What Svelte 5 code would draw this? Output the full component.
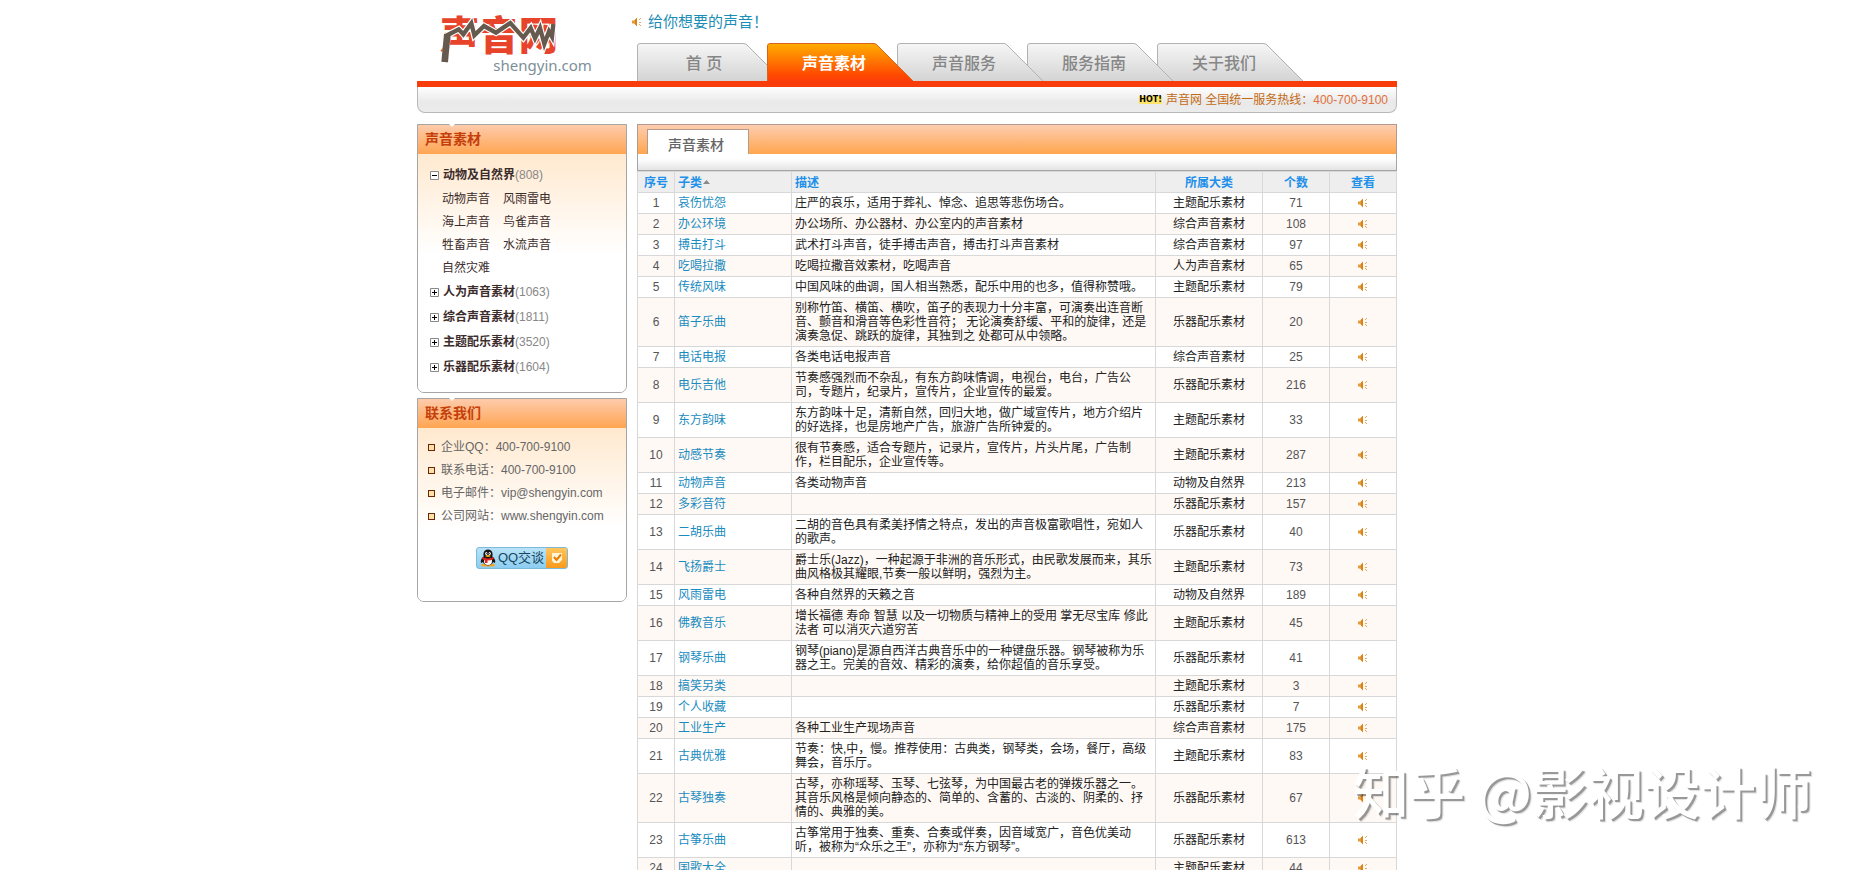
<script>
    const tabs = ['首 页', '声音素材', '声音服务', '服务指南', '关于我们'];
    let active = $state(1);

    const categories = [
        {name: '动物及自然界', count: 808, children: ['动物声音', '风雨雷电', '海上声音', '鸟雀声音', '牲畜声音', '水流声音', '自然灾难']},
        {name: '人为声音素材', count: 1063},
        {name: '综合声音素材', count: 1811},
        {name: '主题配乐素材', count: 3520},
        {name: '乐器配乐素材', count: 1604}
    ];

    const contacts = [
        ['企业QQ', '400-700-9100'],
        ['联系电话', '400-700-9100'],
        ['电子邮件', 'vip@shengyin.com'],
        ['公司网站', 'www.shengyin.com']
    ];

    const rows = [
        ['哀伤忧怨', '庄严的哀乐，适用于葬礼、悼念、追思等悲伤场合。', '主题配乐素材', 71],
        ['办公环境', '办公场所、办公器材、办公室内的声音素材', '综合声音素材', 108],
        ['搏击打斗', '武术打斗声音，徒手搏击声音，搏击打斗声音素材', '综合声音素材', 97],
        ['吃喝拉撒', '吃喝拉撒音效素材，吃喝声音', '人为声音素材', 65],
        ['传统风味', '中国风味的曲调，国人相当熟悉，配乐中用的也多，值得称赞哦。', '主题配乐素材', 79],
        ['笛子乐曲', '别称竹笛、横笛、横吹，笛子的表现力十分丰富，可演奏出连音断音、颤音和滑音等色彩性音符； 无论演奏舒缓、平和的旋律，还是演奏急促、跳跃的旋律，其独到之 处都可从中领略。', '乐器配乐素材', 20],
        ['电话电报', '各类电话电报声音', '综合声音素材', 25],
        ['电乐吉他', '节奏感强烈而不杂乱，有东方韵味情调，电视台，电台，广告公司，专题片，纪录片，宣传片，企业宣传的最爱。', '乐器配乐素材', 216],
        ['东方韵味', '东方韵味十足，清新自然，回归大地，做广域宣传片，地方介绍片的好选择，也是房地产广告，旅游广告所钟爱的。', '主题配乐素材', 33],
        ['动感节奏', '很有节奏感，适合专题片，记录片，宣传片，片头片尾，广告制作，栏目配乐，企业宣传等。', '主题配乐素材', 287],
        ['动物声音', '各类动物声音', '动物及自然界', 213],
        ['多彩音符', '', '乐器配乐素材', 157],
        ['二胡乐曲', '二胡的音色具有柔美抒情之特点，发出的声音极富歌唱性，宛如人的歌声。', '乐器配乐素材', 40],
        ['飞扬爵士', '爵士乐(Jazz)，一种起源于非洲的音乐形式，由民歌发展而来，其乐曲风格极其耀眼,节奏一般以鲜明，强烈为主。', '主题配乐素材', 73],
        ['风雨雷电', '各种自然界的天籁之音', '动物及自然界', 189],
        ['佛教音乐', '增长福德 寿命 智慧 以及一切物质与精神上的受用 掌无尽宝库 修此法者 可以消灭六道穷苦', '主题配乐素材', 45],
        ['钢琴乐曲', '钢琴(piano)是源自西洋古典音乐中的一种键盘乐器。钢琴被称为乐器之王。完美的音效、精彩的演奏，给你超值的音乐享受。', '乐器配乐素材', 41],
        ['搞笑另类', '', '主题配乐素材', 3],
        ['个人收藏', '', '乐器配乐素材', 7],
        ['工业生产', '各种工业生产现场声音', '综合声音素材', 175],
        ['古典优雅', '节奏：快,中，慢。推荐使用：古典类，钢琴类，会场，餐厅，高级舞会，音乐厅。', '主题配乐素材', 83],
        ['古琴独奏', '古琴，亦称瑶琴、玉琴、七弦琴，为中国最古老的弹拨乐器之一。其音乐风格是倾向静态的、简单的、含蓄的、古淡的、阴柔的、抒情的、典雅的美。', '乐器配乐素材', 67],
        ['古筝乐曲', '古筝常用于独奏、重奏、合奏或伴奏，因音域宽广，音色优美动听，被称为“众乐之王”，亦称为“东方钢琴”。', '乐器配乐素材', 613],
        ['国歌大全', '', '主题配乐素材', 44]
    ];
</script>

{#snippet speaker()}
    <svg class="speaker" width="10" height="10" viewBox="0 0 10 10" aria-hidden="true">
        <path d="M0 3.5h2L5 .5v9L2 6.5H0z" fill="#e59a3c"/>
        <path d="M3 3l2-2v8L3 7z" fill="#d98218"/>
        <path d="M7 2h1v1H7zM8 1h1v1H8zM7 5h2v1H7zM7 7h1v1H7zM8 8h1v1H8z" fill="#e0a860"/>
    </svg>
{/snippet}

<div class="page">
    <div class="wrap">
        <header>
            <a class="logo" href="#home">
                <svg width="160" height="76" viewBox="0 0 480 228">
                    <text class="mark" x="18" y="138" font-size="118">声音网</text>
                    <path d="M32 174 41 93 74 76 88 91 112 58 121 94 150 66 186 86 229 57 268 101 290 72 303 103 318 72 331 120 345 82 354 98 358 60" fill="none" stroke="#fff" stroke-width="20"/>
                    <path d="M32 174 41 93 74 76 88 91 112 58 121 94 150 66 186 86 229 57 268 101 290 72 303 103 318 72 331 120 345 82 354 98 358 60" fill="none" stroke="#665a4e" stroke-width="13"/>
                    <path d="M32 174 40 90" fill="none" stroke="#665a4e" stroke-width="20"/>
                    <text class="domain" x="178" y="202" font-size="45">shengyin.com</text>
                </svg>
            </a>
            <div class="top">
                <p class="slogan">{@render speaker()} 给你想要的声音！</p>
                <nav>
                    {#each tabs as tab, i}
                        <a href="#tab{i}" class:active={i === active} style="z-index: {i === active ? 9 : 6 - i}" onclick={() => active = i}>
                            <svg width="150" height="38" viewBox="0 0 150 38" aria-hidden="true">
                                <defs>
                                    <linearGradient id="fill{i}" x1="0" y1="0" x2="0" y2="1">
                                        <stop offset="0" stop-color={i === active ? '#ffae00' : '#f6f6f6'}/>
                                        <stop offset=".85" stop-color={i === active ? '#ff4800' : '#d9d9d9'}/>
                                        <stop offset="1" stop-color={i === active ? '#fc3e08' : '#d4d4d4'}/>
                                    </linearGradient>
                                </defs>
                                <path d="M.5 38V3Q.5.5 3 .5H107Q109 .5 111 3L146 38" fill="url(#fill{i})" stroke={i === active ? '#d8641c' : '#b2b2b2'}/>
                            </svg>
                            <span>{tab}</span>
                        </a>
                    {/each}
                </nav>
            </div>
        </header>
        <div class="hotline">
            <b>HOT!</b>
            <span>声音网 全国统一服务热线：<em>400-700-9100</em></span>
        </div>

        <div class="columns">
            <aside>
                <section class="panel">
                    <h2>声音素材</h2>
                    <div class="body">
                        {#each categories as category}
                            <a class="category" href="#category">
                                <svg width="9" height="9" viewBox="0 0 9 9" aria-hidden="true">
                                    <path d="M.5.5h8v8h-8z" fill="#fff" stroke="#888"/>
                                    <path d={category.children ? 'M2 4.5h5' : 'M2 4.5h5M4.5 2v5'} stroke="#000"/>
                                </svg>
                                <strong>{category.name}</strong><span>({category.count})</span>
                            </a>
                            {#if category.children}
                                <div class="children">
                                    {#each category.children as child}
                                        <a href="#child">{child}</a>
                                    {/each}
                                </div>
                            {/if}
                        {/each}
                    </div>
                </section>

                <section class="panel contact">
                    <h2>联系我们</h2>
                    <div class="body">
                        <ul>
                            {#each contacts as [label, value]}
                                <li>{label}：{value}</li>
                            {/each}
                        </ul>
                        <button class="qq">
                            <svg width="16" height="18" viewBox="0 0 16 18" aria-hidden="true">
                                <ellipse cx="5" cy="16" rx="4" ry="1.6" fill="#f5a623"/>
                                <ellipse cx="11" cy="16" rx="4" ry="1.6" fill="#f5a623"/>
                                <path d="M3 8Q0 11 1 14l2-1zM13 8q3 3 2 6l-2-1z" fill="#151515"/>
                                <ellipse cx="8" cy="11" rx="5.6" ry="5.4" fill="#151515"/>
                                <ellipse cx="8" cy="12" rx="4" ry="4" fill="#fff"/>
                                <ellipse cx="8" cy="5.4" rx="4.6" ry="5" fill="#151515"/>
                                <ellipse cx="6.3" cy="4.4" rx="1.1" ry="1.5" fill="#fff"/>
                                <ellipse cx="9.7" cy="4.4" rx="1.1" ry="1.5" fill="#fff"/>
                                <circle cx="6.6" cy="4.6" r=".5"/>
                                <circle cx="9.4" cy="4.6" r=".5"/>
                                <ellipse cx="8" cy="7" rx="2.6" ry=".9" fill="#f5a623"/>
                                <path d="M2.6 8q5.4 3 10.8 0l.4 2q-3 1.6-6.3 1.6V14H5v-2.600Q3 11 2.200 10z" fill="#e0231c"/>
                            </svg>
                            <span>QQ交谈</span>
                            <i>
                                <svg width="12" height="12" viewBox="0 0 12 12" aria-hidden="true">
                                    <path d="M1 1h10v7l-3 3H3L1 9z" fill="#fff3d8"/>
                                    <path d="M3 5l2.500 3L10 2.500" fill="none" stroke="#e77c00" stroke-width="2"/>
                                </svg>
                            </i>
                        </button>
                    </div>
                </section>
            </aside>

            <main>
                <div class="bar"><h1>声音素材</h1></div>
                <div class="strip"></div>
                <table>
                    <colgroup>
                        <col class="c-no"><col class="c-name"><col><col class="c-type"><col class="c-num"><col class="c-num">
                    </colgroup>
                    <thead>
                        <tr>
                            <th>序号</th>
                            <th class="left">子类<svg width="7" height="4" viewBox="0 0 7 4" aria-hidden="true"><path d="M0 4 3.500 0 7 4z" fill="#888"/></svg></th>
                            <th class="left">描述</th>
                            <th>所属大类</th>
                            <th>个数</th>
                            <th>查看</th>
                        </tr>
                    </thead>
                    <tbody>
                        {#each rows as [name, text, type, count], i}
                            <tr>
                                <td class="number">{i + 1}</td>
                                <td class="left"><a href="#sub{i}">{name}</a></td>
                                <td class="left">{text}</td>
                                <td>{type}</td>
                                <td class="number">{count}</td>
                                <td><a href="#view{i}" aria-label="查看">{@render speaker()}</a></td>
                            </tr>
                        {/each}
                    </tbody>
                </table>
            </main>
        </div>
    </div>
    <div class="watermark">知乎 @影视设计师</div>
</div>

<style>
    :global(body) {
        background: #fff;
    }

    .page {
        position: relative;
        box-sizing: border-box;
        height: 100vh;
        overflow: hidden;
        padding-right: 45px;
        font: 12px/14px "Liberation Sans", "Noto Sans CJK SC", sans-serif;
        color: #222;
    }

    a {
        color: inherit;
        text-decoration: none;
    }

    .wrap {
        max-width: 980px;
        margin: 0 auto;
    }

    header {
        display: grid;
        grid-template-columns: 215px 1fr;
        height: 81px;
        border-bottom: 6px solid #f83c0c;
    }

    .logo {
        padding: 4px 0 0 17px;
    }

    .logo svg {
        display: block;
    }

    .mark {
        font-family: "Noto Sans CJK SC", sans-serif;
        font-weight: 900;
        fill: #e8442c;
    }

    .domain {
        font-family: "Noto Sans", sans-serif;
        fill: #7b8f98;
    }

    .slogan {
        display: flex;
        align-items: center;
        gap: 6px;
        margin: 0;
        height: 44px;
        margin-bottom: -1px;
        font-size: 15px;
        color: #1c8db5;
    }

    nav {
        display: flex;
        margin-left: 5px;
    }

    nav a {
        position: relative;
        width: 130px;
        height: 38px;
        line-height: 41px;
        font-size: 16px;
        font-weight: 500;
        color: #868686;
        text-align: center;
    }

    nav svg {
        position: absolute;
        left: 0;
        top: 0;
    }

    nav span {
        position: relative;
        padding-left: 4px;
    }

    nav .active {
        color: #fff;
        font-weight: bold;
    }

    .hotline {
        display: flex;
        justify-content: flex-end;
        align-items: center;
        gap: 4px;
        box-sizing: border-box;
        height: 26px;
        padding-right: 8px;
        border: 1px solid #b8b8bc;
        border-top: 0;
        border-radius: 0 0 8px 8px;
        background: linear-gradient(#fff, #e9e9e9 60%, #ececec);
        color: #c46a14;
    }

    .hotline b {
        font: bold 8px/8px "DejaVu Sans", sans-serif;
        color: #000;
        background: #ffe566;
    }

    .hotline em {
        font-style: normal;
        color: #e0703c;
    }

    .columns {
        display: flex;
        align-items: flex-start;
        gap: 10px;
        margin-top: 11px;
    }

    aside {
        flex: 0 0 210px;
        display: grid;
        gap: 5px;
    }

    .panel {
        position: relative;
        border: 1px solid #a5a5a5;
        border-radius: 0 0 7px 7px;
    }

    /* notch in the top edge */
    .panel::before {
        content: "";
        position: absolute;
        left: 31px;
        top: -1px;
        border: 3px solid transparent;
        border-top-color: #fff;
        border-bottom: 0;
    }

    h2 {
        margin: 0;
        padding-left: 7px;
        background: linear-gradient(#fdcbab, #ffa552);
        font-size: 14px;
        line-height: 29px;
        color: #c53f0b;
    }

    .body {
        padding: 9px 0 12px 12px;
        background: linear-gradient(#ffe9cf, #fff 100px);
        border-radius: 0 0 6px 6px;
    }

    .category {
        display: flex;
        align-items: center;
        line-height: 25px;
        color: #888;
    }

    .category strong {
        margin-left: 4px;
        color: #3c2c2c;
    }

    .children {
        display: grid;
        grid-template-columns: 48px 48px;
        column-gap: 13px;
        padding-left: 12px;
        line-height: 23px;
        color: #3c2c2c;
    }

    .contact .body {
        padding: 8px 10px 32px;
    }

    ul {
        margin: 0 0 19px;
        padding: 0;
        list-style: none;
        line-height: 23px;
        color: #666;
    }

    li {
        display: flex;
        align-items: center;
    }

    li::before {
        content: "";
        width: 5px;
        height: 5px;
        margin-right: 6px;
        border: 1px solid #6b2606;
        background: #ffe0a8;
    }

    .qq {
        display: flex;
        align-items: center;
        width: 92px;
        height: 22px;
        margin: 0 auto;
        padding: 0 0 0 3px;
        border: 1px solid #7db9d8;
        border-radius: 3px;
        background: linear-gradient(#b9e3f8, #8ccdf0);
        font: inherit;
        font-size: 13px;
        color: #17455f;
        overflow: hidden;
    }

    .qq span {
        flex: 1;
        white-space: nowrap;
    }

    .qq i {
        display: flex;
        align-items: center;
        justify-content: center;
        width: 21px;
        height: 20px;
        background: linear-gradient(#ffc65c, #f99a1c);
    }

    main {
        flex: 1;
        min-width: 0;
    }

    .bar {
        display: flex;
        align-items: flex-end;
        box-sizing: border-box;
        height: 30px;
        padding-left: 9px;
        border: 1px solid #b49a8c;
        border-bottom: 0;
        background: linear-gradient(#fdcdb0, #ffa64e);
    }

    h1 {
        box-sizing: border-box;
        width: 102px;
        height: 25px;
        margin: 0;
        padding-right: 4px;
        border: 1px solid #b49a8c;
        border-bottom: 0;
        background: #fff;
        font-size: 14px;
        font-weight: 500;
        line-height: 31px;
        text-align: center;
        color: #666;
    }

    .strip {
        height: 16px;
        border: 1px solid #a5a5a5;
        border-top: 0;
        background: linear-gradient(#fff 30%, #e4e4e4);
    }

    table {
        width: 100%;
        table-layout: fixed;
        border-collapse: collapse;
    }

    .c-no {
        width: 37px;
    }

    .c-name {
        width: 117px;
    }

    .c-type {
        width: 107px;
    }

    .c-num {
        width: 67px;
    }

    th,
    td {
        padding: 3px;
        border: 1px solid #d8d8d8;
        text-align: center;
    }

    th {
        padding: 4px 3px 2px;
        background: #eee;
        color: #2090ea;
        white-space: nowrap;
    }

    th svg {
        margin-left: 1px;
        vertical-align: 3px;
    }

    .left {
        text-align: left;
    }

    td a {
        color: #1a8cc0;
    }

    .number {
        color: #555;
    }

    tbody tr:nth-child(even) {
        background: #fff9f5;
    }

    .speaker {
        vertical-align: middle;
    }

    td .speaker {
        display: block;
        margin: 0 auto;
    }

    .watermark {
        position: absolute;
        right: 47px;
        bottom: 52px;
        z-index: 10;
        font: 500 56px/56px "Noto Sans CJK SC", sans-serif;
        color: #fff;
        text-shadow: 2px 2px 0 rgb(0 0 0 / 32%), 3px 3px 1px rgb(0 0 0 / 12%);
        white-space: nowrap;
        pointer-events: none;
    }
</style>
